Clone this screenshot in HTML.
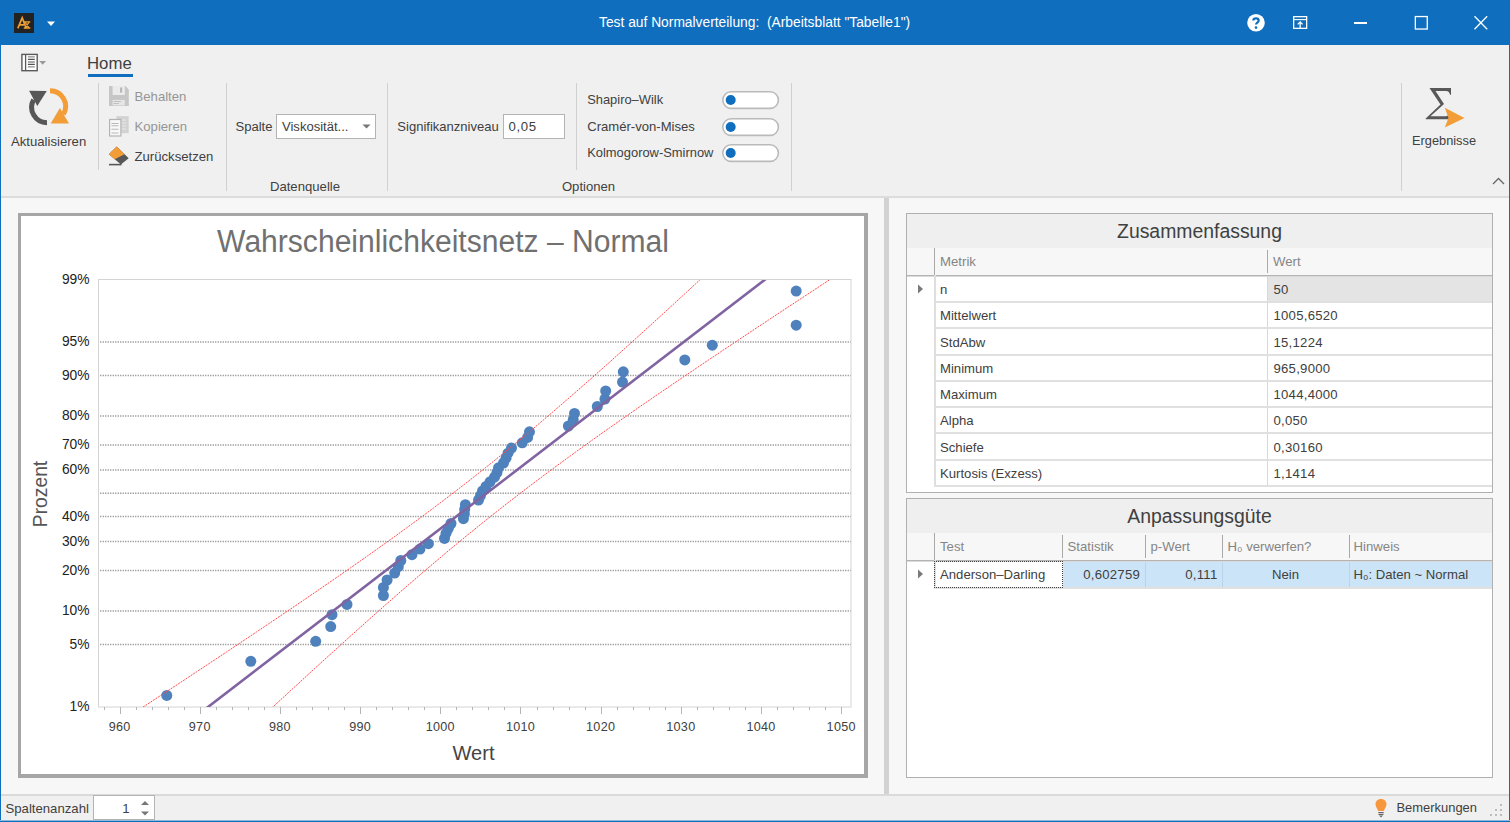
<!DOCTYPE html><html><head><meta charset="utf-8"><style>
html,body{margin:0;padding:0;}
body{width:1510px;height:822px;overflow:hidden;position:relative;background:#f7f7f7;font-family:"Liberation Sans", sans-serif;}
.t{position:absolute;white-space:pre;}
.b{position:absolute;box-sizing:border-box;}
svg{position:absolute;}
</style></head><body>
<div class="b" style="left:0px;top:0px;width:1510px;height:45px;background:#106ebe;"></div>
<div class="b" style="left:14px;top:13px;width:20px;height:20px;background:#222;"></div>
<svg style="left:14px;top:13px" width="20" height="20" viewBox="0 0 20 20"><path d="M3.8 15.3 L8.2 4.8 L12.2 15.3 M6 11.8 H10" stroke="#eea035" stroke-width="1.7" fill="none"/><path d="M9.8 8.8 H16.3 M9.8 15 H16.3 M11 9 L15.2 15 M15.2 9 L11 15" stroke="#eea035" stroke-width="1.3" fill="none"/></svg>
<svg style="left:46px;top:20.5px" width="10" height="6"><path d="M1 0.5 H9 L5 5 Z" fill="#fff"/></svg>
<div class="t" style="left:599.00px;top:15.72px;font-size:13.8px;line-height:13.8px;color:#fff;">Test auf Normalverteilung:&nbsp; (Arbeitsblatt "Tabelle1")</div>
<svg style="left:1246px;top:13px" width="20" height="20" viewBox="0 0 20 20"><circle cx="10" cy="9.8" r="8.8" fill="#fff"/><path d="M7.3 7.6 C7.3 4.6 12.7 4.6 12.7 7.6 C12.7 9.6 10 9.6 10 11.6" stroke="#106ebe" stroke-width="2.2" fill="none"/><circle cx="10" cy="14.6" r="1.3" fill="#106ebe"/></svg>
<svg style="left:1292px;top:15px" width="17" height="16" viewBox="0 0 17 16"><rect x="1.65" y="1.65" width="13" height="11.7" stroke="#fff" stroke-width="1.3" fill="none"/><path d="M1.6 4.6 H14.7" stroke="#fff" stroke-width="1.1"/><path d="M8.15 13.2 V7 M5.7 9.4 L8.15 6.9 L10.6 9.4" stroke="#fff" stroke-width="1.3" fill="none"/></svg>
<div class="b" style="left:1354.3px;top:22.4px;width:12.7px;height:1.3px;background:#fff;"></div>
<svg style="left:1414px;top:15px" width="14" height="15"><rect x="1.35" y="1.55" width="11.9" height="12.5" stroke="#fff" stroke-width="1.3" fill="none"/></svg>
<svg style="left:1473px;top:15px" width="15" height="15"><path d="M1.5 1.2 L14.2 14.2 M14.2 1.2 L1.5 14.2" stroke="#fff" stroke-width="1.3"/></svg>
<div class="b" style="left:0px;top:45px;width:1510px;height:151px;background:#f0f0f0;"></div>
<div class="b" style="left:0px;top:196px;width:1510px;height:2px;background:#dcdcdc;"></div>
<svg style="left:20px;top:52px" width="28" height="21" viewBox="0 0 28 21"><rect x="1.9" y="2.4" width="15.3" height="16.3" stroke="#5a5a5a" stroke-width="1.4" fill="#fff"/><path d="M5.6 2.4 V18.7" stroke="#5a5a5a" stroke-width="1.3"/><path d="M7.9 4.8 H14.8 M7.9 10 H14.8 M7.9 14.9 H14.8" stroke="#8c8c8c" stroke-width="1.3"/><path d="M7.9 7.4 H14.8 M7.9 12.4 H14.8" stroke="#505050" stroke-width="1.1"/><path d="M19.2 9.1 H26.1 L22.65 12.8 Z" fill="#9a9a9a"/></svg>
<div class="t" style="left:87.00px;top:55.58px;font-size:16.8px;line-height:16.8px;color:#404040;">Home</div>
<div class="b" style="left:88px;top:74px;width:45px;height:3px;background:#106ebe;"></div>
<div class="b" style="left:98px;top:83px;width:1px;height:87px;background:#d0d0d0;"></div>
<div class="b" style="left:226px;top:83px;width:1px;height:108px;background:#d0d0d0;"></div>
<div class="b" style="left:387px;top:83px;width:1px;height:108px;background:#d0d0d0;"></div>
<div class="b" style="left:576px;top:83px;width:1px;height:87px;background:#d0d0d0;"></div>
<div class="b" style="left:791px;top:83px;width:1px;height:108px;background:#d0d0d0;"></div>
<div class="b" style="left:1401px;top:83px;width:1px;height:108px;background:#d0d0d0;"></div>
<svg style="left:20px;top:80px" width="60" height="50" viewBox="0 0 60 50">
<path d="M27 42.8 A15.5 15.5 0 0 1 13.6 19.75" stroke="#575757" stroke-width="5" fill="none"/>
<path d="M9.1 10.7 L26.8 11 L17.3 25.9 Z" fill="#575757"/>
<path d="M30 10.8 A15.5 15.5 0 0 1 43.4 34.25" stroke="#f29d38" stroke-width="5" fill="none"/>
<path d="M30.7 43.5 L49 43.5 L39.9 28 Z" fill="#f29d38"/>
</svg>
<div class="t" style="left:11.00px;top:135.17px;font-size:13.15px;line-height:13.15px;color:#404040;">Aktualisieren</div>
<svg style="left:104px;top:82px" width="30" height="30" viewBox="0 0 30 30">
<path d="M5 4 H21.5 L24.8 7.7 V24.1 H5 Z" fill="#c6c6c6"/>
<rect x="8.6" y="4" width="12.2" height="9" fill="#ebebeb"/><rect x="16" y="5.5" width="2.2" height="5.1" fill="#b8b8b8"/>
<rect x="8.6" y="17.9" width="12.2" height="5.5" fill="#e6e6e6"/><path d="M9.5 19.5 H17 M9.5 21.5 H15" stroke="#c0c0c0" stroke-width="1"/>
</svg>
<div class="t" style="left:134.50px;top:90.47px;font-size:13.15px;line-height:13.15px;color:#959595;">Behalten</div>
<svg style="left:104px;top:112px" width="30" height="30" viewBox="0 0 30 30">
<rect x="12.4" y="4.2" width="12.3" height="17" fill="#d2d2d2"/>
<path d="M15 8 H22 M15 11 H22 M15 14 H22 M15 17 H22" stroke="#e8e8e8" stroke-width="1"/>
<rect x="5.6" y="7.5" width="11.3" height="16.5" fill="#f8f8f8" stroke="#b4b4b4" stroke-width="1.2"/>
<path d="M7.5 11.5 H14.5 M7.5 13.8 H14.5 M7.5 17.3 H14.5 M7.5 21 H14.5" stroke="#b8b8b8" stroke-width="1.1"/>
</svg>
<div class="t" style="left:134.50px;top:119.87px;font-size:13.15px;line-height:13.15px;color:#959595;">Kopieren</div>
<svg style="left:104px;top:142px" width="30" height="30" viewBox="0 0 30 30">
<path d="M12.7 4.6 L4.9 12.3 L16.9 22.6 L24.7 16.2 Z" fill="#575757"/>
<path d="M12.7 4.6 L4.9 12.3 L10.6 17.3 L20.5 12.3 Z" fill="#f29d38"/>
<path d="M5 22.6 H17.5" stroke="#575757" stroke-width="1.6"/>
</svg>
<div class="t" style="left:134.50px;top:149.87px;font-size:13.15px;line-height:13.15px;color:#404040;">Zurücksetzen</div>
<div class="t" style="left:235.50px;top:120.35px;font-size:13.05px;line-height:13.05px;color:#404040;">Spalte</div>
<div class="b" style="left:276px;top:114px;width:100px;height:25px;background:#fff;border:1px solid #b4b4b4;"></div>
<div class="t" style="left:282.00px;top:120.35px;font-size:13.05px;line-height:13.05px;color:#404040;">Viskosität...</div>
<svg style="left:362px;top:124px" width="9" height="6"><path d="M0.5 0.5 H8.5 L4.5 4.5 Z" fill="#777"/></svg>
<div class="t" style="left:-95.00px;width:800px;text-align:center;top:179.87px;font-size:13.15px;line-height:13.15px;color:#404040;">Datenquelle</div>
<div class="t" style="left:397.30px;top:119.96px;font-size:13.04px;line-height:13.04px;color:#404040;">Signifikanzniveau</div>
<div class="b" style="left:503px;top:114px;width:62px;height:25px;background:#fff;border:1px solid #b4b4b4;"></div>
<div class="t" style="left:508.50px;top:119.83px;font-size:13.2px;line-height:13.2px;color:#404040;letter-spacing:0.6px;">0,05</div>
<div class="t" style="left:587.20px;top:93.78px;font-size:12.9px;line-height:12.9px;color:#404040;">Shapiro–Wilk</div>
<div class="t" style="left:587.20px;top:119.61px;font-size:13.1px;line-height:13.1px;color:#404040;">Cramér-von-Mises</div>
<div class="t" style="left:587.20px;top:146.76px;font-size:12.92px;line-height:12.92px;color:#404040;">Kolmogorow-Smirnow</div>
<svg style="left:722px;top:91px" width="58" height="19" viewBox="0 0 58 19"><rect x="0.8" y="0.8" width="55.6" height="16.6" rx="8.3" fill="#fff" stroke="#bababa" stroke-width="1.6"/><circle cx="8.7" cy="9" r="5" fill="#106ebe"/></svg>
<svg style="left:722px;top:117.5px" width="58" height="19" viewBox="0 0 58 19"><rect x="0.8" y="0.8" width="55.6" height="16.6" rx="8.3" fill="#fff" stroke="#bababa" stroke-width="1.6"/><circle cx="8.7" cy="9" r="5" fill="#106ebe"/></svg>
<svg style="left:722px;top:144px" width="58" height="19" viewBox="0 0 58 19"><rect x="0.8" y="0.8" width="55.6" height="16.6" rx="8.3" fill="#fff" stroke="#bababa" stroke-width="1.6"/><circle cx="8.7" cy="9" r="5" fill="#106ebe"/></svg>
<div class="t" style="left:188.50px;width:800px;text-align:center;top:179.91px;font-size:13.1px;line-height:13.1px;color:#404040;">Optionen</div>
<svg style="left:1420px;top:85px" width="48" height="45" viewBox="0 0 48 45">
<path d="M9.5 3 H31 V9.8 H30 Q29.5 6.2 26 6 H15.5 L24 19 L10.5 31.2 H26 Q28.5 31 29.5 28.5 H30.5 L28.5 34.3 H5.7 V33.5 L20.5 19.5 Z" fill="#585858"/>
<path d="M24.8 22.7 L44.5 32.9 L24.8 42.5 L28.5 32.9 Z" fill="#f29d38"/>
</svg>
<div class="t" style="left:1044.00px;width:800px;text-align:center;top:134.86px;font-size:12.8px;line-height:12.8px;color:#404040;">Ergebnisse</div>
<svg style="left:1492px;top:177px" width="13" height="8"><path d="M1 7 L6.5 1.5 L12 7" stroke="#666" stroke-width="1.3" fill="none"/></svg>
<div class="b" style="left:0px;top:198px;width:1510px;height:596px;background:#f7f7f7;"></div>
<div class="b" style="left:884px;top:198px;width:5px;height:596px;background:#d2d2d2;"></div>
<div class="b" style="left:18px;top:213px;width:850px;height:565px;background:#fff;border:3px solid #a6a6a6;border-right-width:4px;border-bottom-width:4px;"></div>
<svg style="left:0;top:0" width="1510" height="822" viewBox="0 0 1510 822">
<path d="M101 342.09 H851" stroke="#dadada" stroke-width="1.5" stroke-dasharray="2 3" />
<path d="M100 342.09 H851" stroke="#a2a2a2" stroke-width="1.5" stroke-dasharray="1 2 1 1" />
<path d="M101 375.48 H851" stroke="#dadada" stroke-width="1.5" stroke-dasharray="2 3" />
<path d="M100 375.48 H851" stroke="#a2a2a2" stroke-width="1.5" stroke-dasharray="1 2 1 1" />
<path d="M101 415.91 H851" stroke="#dadada" stroke-width="1.5" stroke-dasharray="2 3" />
<path d="M100 415.91 H851" stroke="#a2a2a2" stroke-width="1.5" stroke-dasharray="1 2 1 1" />
<path d="M101 445.06 H851" stroke="#dadada" stroke-width="1.5" stroke-dasharray="2 3" />
<path d="M100 445.06 H851" stroke="#a2a2a2" stroke-width="1.5" stroke-dasharray="1 2 1 1" />
<path d="M101 469.97 H851" stroke="#dadada" stroke-width="1.5" stroke-dasharray="2 3" />
<path d="M100 469.97 H851" stroke="#a2a2a2" stroke-width="1.5" stroke-dasharray="1 2 1 1" />
<path d="M101 493.25 H851" stroke="#dadada" stroke-width="1.5" stroke-dasharray="2 3" />
<path d="M100 493.25 H851" stroke="#a2a2a2" stroke-width="1.5" stroke-dasharray="1 2 1 1" />
<path d="M101 516.53 H851" stroke="#dadada" stroke-width="1.5" stroke-dasharray="2 3" />
<path d="M100 516.53 H851" stroke="#a2a2a2" stroke-width="1.5" stroke-dasharray="1 2 1 1" />
<path d="M101 541.44 H851" stroke="#dadada" stroke-width="1.5" stroke-dasharray="2 3" />
<path d="M100 541.44 H851" stroke="#a2a2a2" stroke-width="1.5" stroke-dasharray="1 2 1 1" />
<path d="M101 570.59 H851" stroke="#dadada" stroke-width="1.5" stroke-dasharray="2 3" />
<path d="M100 570.59 H851" stroke="#a2a2a2" stroke-width="1.5" stroke-dasharray="1 2 1 1" />
<path d="M101 611.02 H851" stroke="#dadada" stroke-width="1.5" stroke-dasharray="2 3" />
<path d="M100 611.02 H851" stroke="#a2a2a2" stroke-width="1.5" stroke-dasharray="1 2 1 1" />
<path d="M101 644.41 H851" stroke="#dadada" stroke-width="1.5" stroke-dasharray="2 3" />
<path d="M100 644.41 H851" stroke="#a2a2a2" stroke-width="1.5" stroke-dasharray="1 2 1 1" />
<rect x="98.5" y="279.5" width="752.5" height="427.5" fill="none" stroke="#d4d4d4" stroke-width="1"/>
<path d="M104.5 707 V710" stroke="#b4b4b4" stroke-width="1"/>
<path d="M120.5 707 V714" stroke="#b4b4b4" stroke-width="1"/>
<path d="M136.5 707 V710" stroke="#b4b4b4" stroke-width="1"/>
<path d="M152.5 707 V710" stroke="#b4b4b4" stroke-width="1"/>
<path d="M168.5 707 V710" stroke="#b4b4b4" stroke-width="1"/>
<path d="M184.5 707 V710" stroke="#b4b4b4" stroke-width="1"/>
<path d="M200.5 707 V714" stroke="#b4b4b4" stroke-width="1"/>
<path d="M216.5 707 V710" stroke="#b4b4b4" stroke-width="1"/>
<path d="M232.5 707 V710" stroke="#b4b4b4" stroke-width="1"/>
<path d="M248.5 707 V710" stroke="#b4b4b4" stroke-width="1"/>
<path d="M264.5 707 V710" stroke="#b4b4b4" stroke-width="1"/>
<path d="M280.5 707 V714" stroke="#b4b4b4" stroke-width="1"/>
<path d="M296.5 707 V710" stroke="#b4b4b4" stroke-width="1"/>
<path d="M312.5 707 V710" stroke="#b4b4b4" stroke-width="1"/>
<path d="M328.5 707 V710" stroke="#b4b4b4" stroke-width="1"/>
<path d="M344.5 707 V710" stroke="#b4b4b4" stroke-width="1"/>
<path d="M360.5 707 V714" stroke="#b4b4b4" stroke-width="1"/>
<path d="M376.5 707 V710" stroke="#b4b4b4" stroke-width="1"/>
<path d="M392.5 707 V710" stroke="#b4b4b4" stroke-width="1"/>
<path d="M408.5 707 V710" stroke="#b4b4b4" stroke-width="1"/>
<path d="M424.5 707 V710" stroke="#b4b4b4" stroke-width="1"/>
<path d="M440.5 707 V714" stroke="#b4b4b4" stroke-width="1"/>
<path d="M456.5 707 V710" stroke="#b4b4b4" stroke-width="1"/>
<path d="M472.5 707 V710" stroke="#b4b4b4" stroke-width="1"/>
<path d="M488.5 707 V710" stroke="#b4b4b4" stroke-width="1"/>
<path d="M504.5 707 V710" stroke="#b4b4b4" stroke-width="1"/>
<path d="M520.5 707 V714" stroke="#b4b4b4" stroke-width="1"/>
<path d="M537.5 707 V710" stroke="#b4b4b4" stroke-width="1"/>
<path d="M553.5 707 V710" stroke="#b4b4b4" stroke-width="1"/>
<path d="M569.5 707 V710" stroke="#b4b4b4" stroke-width="1"/>
<path d="M585.5 707 V710" stroke="#b4b4b4" stroke-width="1"/>
<path d="M601.5 707 V714" stroke="#b4b4b4" stroke-width="1"/>
<path d="M617.5 707 V710" stroke="#b4b4b4" stroke-width="1"/>
<path d="M633.5 707 V710" stroke="#b4b4b4" stroke-width="1"/>
<path d="M649.5 707 V710" stroke="#b4b4b4" stroke-width="1"/>
<path d="M665.5 707 V710" stroke="#b4b4b4" stroke-width="1"/>
<path d="M681.5 707 V714" stroke="#b4b4b4" stroke-width="1"/>
<path d="M697.5 707 V710" stroke="#b4b4b4" stroke-width="1"/>
<path d="M713.5 707 V710" stroke="#b4b4b4" stroke-width="1"/>
<path d="M729.5 707 V710" stroke="#b4b4b4" stroke-width="1"/>
<path d="M745.5 707 V710" stroke="#b4b4b4" stroke-width="1"/>
<path d="M761.5 707 V714" stroke="#b4b4b4" stroke-width="1"/>
<path d="M777.5 707 V710" stroke="#b4b4b4" stroke-width="1"/>
<path d="M793.5 707 V710" stroke="#b4b4b4" stroke-width="1"/>
<path d="M809.5 707 V710" stroke="#b4b4b4" stroke-width="1"/>
<path d="M825.5 707 V710" stroke="#b4b4b4" stroke-width="1"/>
<path d="M841.5 707 V714" stroke="#b4b4b4" stroke-width="1"/>
<clipPath id="pc"><rect x="99" y="280" width="752" height="427"/></clipPath>
<g clip-path="url(#pc)">
<circle cx="166.8" cy="695.47" r="5.5" fill="#4f81bd"/>
<circle cx="250.8" cy="661.30" r="5.5" fill="#4f81bd"/>
<circle cx="315.7" cy="641.32" r="5.5" fill="#4f81bd"/>
<circle cx="330.7" cy="626.58" r="5.5" fill="#4f81bd"/>
<circle cx="332" cy="614.65" r="5.5" fill="#4f81bd"/>
<circle cx="347" cy="604.47" r="5.5" fill="#4f81bd"/>
<circle cx="383.4" cy="595.50" r="5.5" fill="#4f81bd"/>
<circle cx="383.4" cy="587.41" r="5.5" fill="#4f81bd"/>
<circle cx="387.1" cy="579.99" r="5.5" fill="#4f81bd"/>
<circle cx="394.7" cy="573.10" r="5.5" fill="#4f81bd"/>
<circle cx="398.3" cy="566.63" r="5.5" fill="#4f81bd"/>
<circle cx="400.8" cy="560.50" r="5.5" fill="#4f81bd"/>
<circle cx="412" cy="554.66" r="5.5" fill="#4f81bd"/>
<circle cx="420" cy="549.06" r="5.5" fill="#4f81bd"/>
<circle cx="428.4" cy="543.66" r="5.5" fill="#4f81bd"/>
<circle cx="444.5" cy="538.43" r="5.5" fill="#4f81bd"/>
<circle cx="446" cy="533.34" r="5.5" fill="#4f81bd"/>
<circle cx="448.4" cy="528.37" r="5.5" fill="#4f81bd"/>
<circle cx="451" cy="523.50" r="5.5" fill="#4f81bd"/>
<circle cx="463.4" cy="518.71" r="5.5" fill="#4f81bd"/>
<circle cx="464.4" cy="513.99" r="5.5" fill="#4f81bd"/>
<circle cx="464.7" cy="509.33" r="5.5" fill="#4f81bd"/>
<circle cx="465.4" cy="504.71" r="5.5" fill="#4f81bd"/>
<circle cx="478.5" cy="500.11" r="5.5" fill="#4f81bd"/>
<circle cx="480.5" cy="495.54" r="5.5" fill="#4f81bd"/>
<circle cx="482.5" cy="490.96" r="5.5" fill="#4f81bd"/>
<circle cx="486" cy="486.39" r="5.5" fill="#4f81bd"/>
<circle cx="490" cy="481.79" r="5.5" fill="#4f81bd"/>
<circle cx="494.5" cy="477.17" r="5.5" fill="#4f81bd"/>
<circle cx="497" cy="472.51" r="5.5" fill="#4f81bd"/>
<circle cx="498.5" cy="467.79" r="5.5" fill="#4f81bd"/>
<circle cx="503.5" cy="463.00" r="5.5" fill="#4f81bd"/>
<circle cx="506" cy="458.13" r="5.5" fill="#4f81bd"/>
<circle cx="508" cy="453.16" r="5.5" fill="#4f81bd"/>
<circle cx="511.5" cy="448.07" r="5.5" fill="#4f81bd"/>
<circle cx="522.2" cy="442.84" r="5.5" fill="#4f81bd"/>
<circle cx="527.6" cy="437.44" r="5.5" fill="#4f81bd"/>
<circle cx="529.5" cy="431.84" r="5.5" fill="#4f81bd"/>
<circle cx="568.4" cy="426.00" r="5.5" fill="#4f81bd"/>
<circle cx="573.2" cy="419.87" r="5.5" fill="#4f81bd"/>
<circle cx="574.5" cy="413.40" r="5.5" fill="#4f81bd"/>
<circle cx="597.3" cy="406.51" r="5.5" fill="#4f81bd"/>
<circle cx="604.9" cy="399.09" r="5.5" fill="#4f81bd"/>
<circle cx="605.7" cy="391.00" r="5.5" fill="#4f81bd"/>
<circle cx="622.5" cy="382.03" r="5.5" fill="#4f81bd"/>
<circle cx="623.3" cy="371.85" r="5.5" fill="#4f81bd"/>
<circle cx="684.8" cy="359.92" r="5.5" fill="#4f81bd"/>
<circle cx="712.3" cy="345.18" r="5.5" fill="#4f81bd"/>
<circle cx="796.2" cy="325.20" r="5.5" fill="#4f81bd"/>
<circle cx="796.2" cy="291.03" r="5.5" fill="#4f81bd"/>
<path d="M191.06 720 L777.53 270" stroke="#8064a2" stroke-width="2.6" fill="none"/>
<polyline points="135.51,712.00 141.61,708.00 147.71,704.00 153.80,700.00 159.89,696.00 165.97,692.00 172.05,688.00 178.12,684.00 184.19,680.00 190.25,676.00 196.31,672.00 202.36,668.00 208.40,664.00 214.43,660.00 220.46,656.00 226.48,652.00 232.49,648.00 238.50,644.00 244.49,640.00 250.47,636.00 256.45,632.00 262.41,628.00 268.37,624.00 274.31,620.00 280.24,616.00 286.16,612.00 292.07,608.00 297.96,604.00 303.84,600.00 309.70,596.00 315.55,592.00 321.38,588.00 327.20,584.00 333.00,580.00 338.78,576.00 344.54,572.00 350.28,568.00 356.00,564.00 361.70,560.00 367.37,556.00 373.02,552.00 378.65,548.00 384.26,544.00 389.83,540.00 395.38,536.00 400.91,532.00 406.40,528.00 411.87,524.00 417.31,520.00 422.71,516.00 428.09,512.00 433.43,508.00 438.75,504.00 444.03,500.00 449.28,496.00 454.50,492.00 459.69,488.00 464.84,484.00 469.97,480.00 475.06,476.00 480.12,472.00 485.15,468.00 490.15,464.00 495.12,460.00 500.06,456.00 504.98,452.00 509.86,448.00 514.72,444.00 519.55,440.00 524.36,436.00 529.14,432.00 533.90,428.00 538.64,424.00 543.35,420.00 548.05,416.00 552.72,412.00 557.38,408.00 562.01,404.00 566.63,400.00 571.23,396.00 575.81,392.00 580.38,388.00 584.93,384.00 589.47,380.00 594.00,376.00 598.51,372.00 603.01,368.00 607.49,364.00 611.97,360.00 616.44,356.00 620.89,352.00 625.34,348.00 629.77,344.00 634.20,340.00 638.62,336.00 643.02,332.00 647.43,328.00 651.82,324.00 656.21,320.00 660.59,316.00 664.96,312.00 669.33,308.00 673.69,304.00 678.04,300.00 682.39,296.00 686.74,292.00 691.08,288.00 695.41,284.00 699.74,280.00 704.07,276.00" stroke="#ff4a4a" stroke-width="1" stroke-dasharray="2 1" fill="none"/>
<polyline points="267.46,712.00 271.78,708.00 276.11,704.00 280.45,700.00 284.78,696.00 289.13,692.00 293.47,688.00 297.83,684.00 302.18,680.00 306.55,676.00 310.92,672.00 315.30,668.00 319.68,664.00 324.07,660.00 328.47,656.00 332.88,652.00 337.29,648.00 341.72,644.00 346.15,640.00 350.59,636.00 355.04,632.00 359.50,628.00 363.97,624.00 368.46,620.00 372.95,616.00 377.46,612.00 381.98,608.00 386.51,604.00 391.06,600.00 395.62,596.00 400.20,592.00 404.79,588.00 409.40,584.00 414.03,580.00 418.68,576.00 423.35,572.00 428.03,568.00 432.74,564.00 437.47,560.00 442.22,556.00 446.99,552.00 451.79,548.00 456.61,544.00 461.46,540.00 466.34,536.00 471.24,532.00 476.17,528.00 481.13,524.00 486.12,520.00 491.14,516.00 496.19,512.00 501.27,508.00 506.38,504.00 511.52,500.00 516.70,496.00 521.90,492.00 527.14,488.00 532.41,484.00 537.72,480.00 543.05,476.00 548.42,472.00 553.81,468.00 559.24,464.00 564.69,460.00 570.18,456.00 575.69,452.00 581.23,448.00 586.80,444.00 592.39,440.00 598.01,436.00 603.65,432.00 609.32,428.00 615.01,424.00 620.72,420.00 626.46,416.00 632.21,412.00 637.98,408.00 643.77,404.00 649.58,400.00 655.41,396.00 661.25,392.00 667.11,388.00 672.98,384.00 678.87,380.00 684.77,376.00 690.68,372.00 696.61,368.00 702.55,364.00 708.50,360.00 714.46,356.00 720.43,352.00 726.41,348.00 732.40,344.00 738.40,340.00 744.41,336.00 750.43,332.00 756.45,328.00 762.49,324.00 768.52,320.00 774.57,316.00 780.62,312.00 786.68,308.00 792.75,304.00 798.82,300.00 804.90,296.00 810.98,292.00 817.06,288.00 823.16,284.00 829.25,280.00 835.35,276.00" stroke="#ff4a4a" stroke-width="1" stroke-dasharray="2 1" fill="none"/>
</g></svg>
<div class="t" style="left:-710.50px;width:800px;text-align:right;top:272.78px;font-size:13.8px;line-height:13.8px;color:#222;">99%</div>
<div class="t" style="left:-710.50px;width:800px;text-align:right;top:335.41px;font-size:13.8px;line-height:13.8px;color:#222;">95%</div>
<div class="t" style="left:-710.50px;width:800px;text-align:right;top:368.79px;font-size:13.8px;line-height:13.8px;color:#222;">90%</div>
<div class="t" style="left:-710.50px;width:800px;text-align:right;top:409.22px;font-size:13.8px;line-height:13.8px;color:#222;">80%</div>
<div class="t" style="left:-710.50px;width:800px;text-align:right;top:438.38px;font-size:13.8px;line-height:13.8px;color:#222;">70%</div>
<div class="t" style="left:-710.50px;width:800px;text-align:right;top:463.29px;font-size:13.8px;line-height:13.8px;color:#222;">60%</div>
<div class="t" style="left:-710.50px;width:800px;text-align:right;top:509.85px;font-size:13.8px;line-height:13.8px;color:#222;">40%</div>
<div class="t" style="left:-710.50px;width:800px;text-align:right;top:534.76px;font-size:13.8px;line-height:13.8px;color:#222;">30%</div>
<div class="t" style="left:-710.50px;width:800px;text-align:right;top:563.91px;font-size:13.8px;line-height:13.8px;color:#222;">20%</div>
<div class="t" style="left:-710.50px;width:800px;text-align:right;top:604.34px;font-size:13.8px;line-height:13.8px;color:#222;">10%</div>
<div class="t" style="left:-710.50px;width:800px;text-align:right;top:637.73px;font-size:13.8px;line-height:13.8px;color:#222;">5%</div>
<div class="t" style="left:-710.50px;width:800px;text-align:right;top:700.36px;font-size:13.8px;line-height:13.8px;color:#222;">1%</div>
<div class="t" style="left:-280.40px;width:800px;text-align:center;top:720.83px;font-size:12.6px;line-height:12.6px;color:#404040;letter-spacing:0.3px;">960</div>
<div class="t" style="left:-200.22px;width:800px;text-align:center;top:720.83px;font-size:12.6px;line-height:12.6px;color:#404040;letter-spacing:0.3px;">970</div>
<div class="t" style="left:-120.04px;width:800px;text-align:center;top:720.83px;font-size:12.6px;line-height:12.6px;color:#404040;letter-spacing:0.3px;">980</div>
<div class="t" style="left:-39.86px;width:800px;text-align:center;top:720.83px;font-size:12.6px;line-height:12.6px;color:#404040;letter-spacing:0.3px;">990</div>
<div class="t" style="left:40.32px;width:800px;text-align:center;top:720.83px;font-size:12.6px;line-height:12.6px;color:#404040;letter-spacing:0.3px;">1000</div>
<div class="t" style="left:120.50px;width:800px;text-align:center;top:720.83px;font-size:12.6px;line-height:12.6px;color:#404040;letter-spacing:0.3px;">1010</div>
<div class="t" style="left:200.68px;width:800px;text-align:center;top:720.83px;font-size:12.6px;line-height:12.6px;color:#404040;letter-spacing:0.3px;">1020</div>
<div class="t" style="left:280.86px;width:800px;text-align:center;top:720.83px;font-size:12.6px;line-height:12.6px;color:#404040;letter-spacing:0.3px;">1030</div>
<div class="t" style="left:361.04px;width:800px;text-align:center;top:720.83px;font-size:12.6px;line-height:12.6px;color:#404040;letter-spacing:0.3px;">1040</div>
<div class="t" style="left:441.22px;width:800px;text-align:center;top:720.83px;font-size:12.6px;line-height:12.6px;color:#404040;letter-spacing:0.3px;">1050</div>
<div class="t" style="left:43.40px;width:800px;text-align:center;top:226.46px;font-size:31px;line-height:31px;color:#707070;transform:scaleX(0.97);">Wahrscheinlichkeitsnetz – Normal</div>
<div class="t" style="left:73.50px;width:800px;text-align:center;top:743.49px;font-size:20.1px;line-height:20.1px;color:#444;">Wert</div>
<div class="t" style="left:47.4px;top:493.5px;font-size:19.3px;line-height:19.3px;color:#555;transform-origin:0 0;transform:rotate(-90deg) translate(-50%,-16.3px);">Prozent</div>
<div class="b" style="left:906px;top:213px;width:587px;height:280px;background:#fff;border:1px solid #b0b0b0;"></div>
<div class="b" style="left:907px;top:214px;width:585px;height:34px;background:#efefef;"></div>
<div class="b" style="left:907px;top:248px;width:585px;height:27px;background:#f7f7f7;"></div>
<div class="b" style="left:907px;top:275px;width:585px;height:1px;background:#b4b4b4;"></div>
<div class="b" style="left:907px;top:276px;width:585px;height:1px;background:#dadada;"></div>
<div class="t" style="left:799.50px;width:800px;text-align:center;top:222.18px;font-size:19.4px;line-height:19.4px;color:#404040;">Zusammenfassung</div>
<div class="b" style="left:934px;top:248px;width:1px;height:27px;background:#a8a8a8;"></div>
<div class="b" style="left:1267px;top:250px;width:1px;height:23px;background:#a8a8a8;"></div>
<div class="t" style="left:940.00px;top:254.83px;font-size:13.2px;line-height:13.2px;color:#858585;">Metrik</div>
<div class="t" style="left:1273.00px;top:254.83px;font-size:13.2px;line-height:13.2px;color:#858585;">Wert</div>
<div class="b" style="left:1268px;top:277px;width:224px;height:24px;background:#e4e4e4;"></div>
<div class="b" style="left:934px;top:275px;width:2px;height:212px;background:#dedede;"></div>
<div class="b" style="left:1267px;top:277px;width:1px;height:210px;background:#d8d8d8;"></div>
<div class="b" style="left:934px;top:301px;width:558px;height:2px;background:#e0e0e0;"></div>
<div class="t" style="left:940.00px;top:282.57px;font-size:13.15px;line-height:13.15px;color:#404040;">n</div>
<div class="t" style="left:1273.50px;top:282.57px;font-size:13.15px;line-height:13.15px;color:#404040;letter-spacing:0.25px;">50</div>
<div class="b" style="left:934px;top:327px;width:558px;height:2px;background:#e0e0e0;"></div>
<div class="t" style="left:940.00px;top:308.57px;font-size:13.15px;line-height:13.15px;color:#404040;">Mittelwert</div>
<div class="t" style="left:1273.50px;top:308.57px;font-size:13.15px;line-height:13.15px;color:#404040;letter-spacing:0.25px;">1005,6520</div>
<div class="b" style="left:934px;top:354px;width:558px;height:2px;background:#e0e0e0;"></div>
<div class="t" style="left:940.00px;top:335.57px;font-size:13.15px;line-height:13.15px;color:#404040;">StdAbw</div>
<div class="t" style="left:1273.50px;top:335.57px;font-size:13.15px;line-height:13.15px;color:#404040;letter-spacing:0.25px;">15,1224</div>
<div class="b" style="left:934px;top:380px;width:558px;height:2px;background:#e0e0e0;"></div>
<div class="t" style="left:940.00px;top:361.57px;font-size:13.15px;line-height:13.15px;color:#404040;">Minimum</div>
<div class="t" style="left:1273.50px;top:361.57px;font-size:13.15px;line-height:13.15px;color:#404040;letter-spacing:0.25px;">965,9000</div>
<div class="b" style="left:934px;top:406px;width:558px;height:2px;background:#e0e0e0;"></div>
<div class="t" style="left:940.00px;top:387.57px;font-size:13.15px;line-height:13.15px;color:#404040;">Maximum</div>
<div class="t" style="left:1273.50px;top:387.57px;font-size:13.15px;line-height:13.15px;color:#404040;letter-spacing:0.25px;">1044,4000</div>
<div class="b" style="left:934px;top:432px;width:558px;height:2px;background:#e0e0e0;"></div>
<div class="t" style="left:940.00px;top:413.57px;font-size:13.15px;line-height:13.15px;color:#404040;">Alpha</div>
<div class="t" style="left:1273.50px;top:413.57px;font-size:13.15px;line-height:13.15px;color:#404040;letter-spacing:0.25px;">0,050</div>
<div class="b" style="left:934px;top:459px;width:558px;height:2px;background:#e0e0e0;"></div>
<div class="t" style="left:940.00px;top:440.57px;font-size:13.15px;line-height:13.15px;color:#404040;">Schiefe</div>
<div class="t" style="left:1273.50px;top:440.57px;font-size:13.15px;line-height:13.15px;color:#404040;letter-spacing:0.25px;">0,30160</div>
<div class="b" style="left:934px;top:485px;width:558px;height:2px;background:#e0e0e0;"></div>
<div class="t" style="left:940.00px;top:466.57px;font-size:13.15px;line-height:13.15px;color:#404040;">Kurtosis (Exzess)</div>
<div class="t" style="left:1273.50px;top:466.57px;font-size:13.15px;line-height:13.15px;color:#404040;letter-spacing:0.25px;">1,1414</div>
<svg style="left:917px;top:284px" width="7" height="10"><path d="M1 0.5 L6 5 L1 9.5 Z" fill="#7a7a7a"/></svg>
<div class="b" style="left:906px;top:498px;width:587px;height:280px;background:#fff;border:1px solid #b0b0b0;"></div>
<div class="b" style="left:907px;top:499px;width:585px;height:34px;background:#efefef;"></div>
<div class="b" style="left:907px;top:533px;width:585px;height:27px;background:#f7f7f7;"></div>
<div class="b" style="left:907px;top:560px;width:585px;height:1px;background:#b4b4b4;"></div>
<div class="b" style="left:907px;top:561px;width:585px;height:1px;background:#dadada;"></div>
<div class="t" style="left:799.50px;width:800px;text-align:center;top:507.18px;font-size:19.4px;line-height:19.4px;color:#404040;">Anpassungsgüte</div>
<div class="b" style="left:934px;top:533px;width:1px;height:27px;background:#a8a8a8;"></div>
<div class="b" style="left:1062px;top:535px;width:1px;height:23px;background:#a8a8a8;"></div>
<div class="b" style="left:1145px;top:535px;width:1px;height:23px;background:#a8a8a8;"></div>
<div class="b" style="left:1222px;top:535px;width:1px;height:23px;background:#a8a8a8;"></div>
<div class="b" style="left:1349px;top:535px;width:1px;height:23px;background:#a8a8a8;"></div>
<div class="t" style="left:940.00px;top:540.33px;font-size:13.2px;line-height:13.2px;color:#858585;">Test</div>
<div class="t" style="left:1067.50px;top:540.33px;font-size:13.2px;line-height:13.2px;color:#858585;">Statistik</div>
<div class="t" style="left:1150.50px;top:540.33px;font-size:13.2px;line-height:13.2px;color:#858585;">p-Wert</div>
<div class="t" style="left:1227.50px;top:540.33px;font-size:13.2px;line-height:13.2px;color:#858585;">H₀ verwerfen?</div>
<div class="t" style="left:1353.50px;top:540.33px;font-size:13.2px;line-height:13.2px;color:#858585;">Hinweis</div>
<div class="b" style="left:1063px;top:562px;width:429px;height:25px;background:#cce4f7;"></div>
<div class="b" style="left:1145px;top:562px;width:1px;height:25px;background:#b9d3e8;"></div>
<div class="b" style="left:1222px;top:562px;width:1px;height:25px;background:#b9d3e8;"></div>
<div class="b" style="left:1349px;top:562px;width:1px;height:25px;background:#b9d3e8;"></div>
<div class="b" style="left:934px;top:560px;width:2px;height:28px;background:#dedede;"></div>
<div class="b" style="left:934px;top:587px;width:558px;height:2px;background:#e0e0e0;"></div>
<div class="b" style="left:934px;top:561px;width:129px;height:27px;border:1px dotted #404040;"></div>
<div class="t" style="left:940.00px;top:568.17px;font-size:13.15px;line-height:13.15px;color:#404040;">Anderson–Darling</div>
<div class="t" style="left:340.00px;width:800px;text-align:right;top:568.17px;font-size:13.15px;line-height:13.15px;color:#404040;letter-spacing:0.25px;">0,602759</div>
<div class="t" style="left:417.50px;width:800px;text-align:right;top:568.17px;font-size:13.15px;line-height:13.15px;color:#404040;letter-spacing:0.25px;">0,111</div>
<div class="t" style="left:885.50px;width:800px;text-align:center;top:568.17px;font-size:13.15px;line-height:13.15px;color:#404040;">Nein</div>
<div class="t" style="left:1353.50px;top:568.17px;font-size:13.15px;line-height:13.15px;color:#404040;">H₀: Daten ~ Normal</div>
<svg style="left:917px;top:569px" width="7" height="10"><path d="M1 0.5 L6 5 L1 9.5 Z" fill="#7a7a7a"/></svg>
<div class="b" style="left:0px;top:794px;width:1510px;height:2px;background:#dadada;"></div>
<div class="b" style="left:0px;top:796px;width:1510px;height:25px;background:#f0f0f0;"></div>
<div class="t" style="left:5.50px;top:801.55px;font-size:13.17px;line-height:13.17px;color:#404040;">Spaltenanzahl</div>
<div class="b" style="left:93px;top:795px;width:62px;height:25px;background:#fff;border:1px solid #b4b4b4;"></div>
<div class="t" style="left:-670.50px;width:800px;text-align:right;top:801.55px;font-size:13.17px;line-height:13.17px;color:#404040;">1</div>
<svg style="left:140px;top:800px" width="10" height="17"><path d="M1 5 L5 1 L9 5 Z" fill="#777"/><path d="M1 11.5 L5 15.5 L9 11.5 Z" fill="#777"/></svg>
<svg style="left:1374px;top:798px" width="14" height="20" viewBox="0 0 14 20"><path d="M7 1 C3.5 1 1.5 3.5 1.5 6.3 C1.5 9 3.5 10.5 4.2 13 H9.8 C10.5 10.5 12.5 9 12.5 6.3 C12.5 3.5 10.5 1 7 1 Z" fill="#f7963a"/><path d="M4.3 14.5 H9.7 M4.5 16.3 H9.5" stroke="#666" stroke-width="1.2"/><path d="M5 17.5 H9 L7 19.5 Z" fill="#666"/></svg>
<div class="t" style="left:1396.50px;top:801.85px;font-size:12.93px;line-height:12.93px;color:#404040;">Bemerkungen</div>
<div class="b" style="left:1499.5px;top:803.5px;width:2px;height:2px;background:#bdbdbd;"></div>
<div class="b" style="left:1494.5px;top:808.5px;width:2px;height:2px;background:#bdbdbd;"></div>
<div class="b" style="left:1499.5px;top:808.5px;width:2px;height:2px;background:#bdbdbd;"></div>
<div class="b" style="left:1489.5px;top:813.5px;width:2px;height:2px;background:#bdbdbd;"></div>
<div class="b" style="left:1494.5px;top:813.5px;width:2px;height:2px;background:#bdbdbd;"></div>
<div class="b" style="left:1499.5px;top:813.5px;width:2px;height:2px;background:#bdbdbd;"></div>
<div class="b" style="left:0px;top:44px;width:1px;height:778px;background:#106ebe;"></div>
<div class="b" style="left:1509px;top:44px;width:1px;height:778px;background:#106ebe;"></div>
<div class="b" style="left:0px;top:821px;width:1510px;height:1px;background:#106ebe;"></div>
<div class="b" style="left:0px;top:820px;width:1510px;height:1px;background:#8fb8dd;"></div>
<!--BODY-->
</body></html>
